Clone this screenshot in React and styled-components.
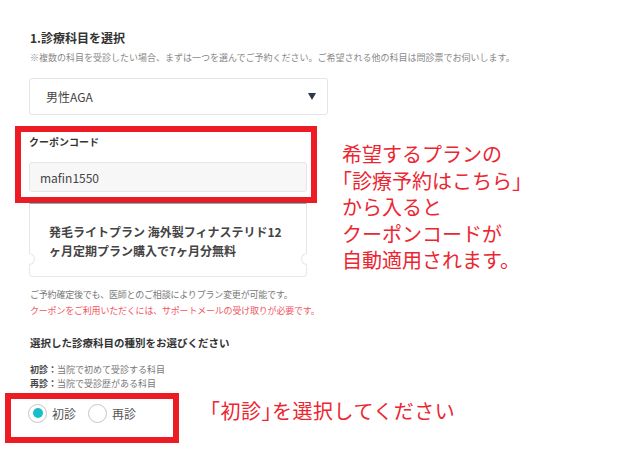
import styled, { createGlobalStyle } from 'styled-components';

const GlobalStyle = createGlobalStyle`
  html, body {
    margin: 0;
    padding: 0;
    background: #fff;
  }

  body {
    font-family: "Noto Sans CJK JP", "Noto Sans", sans-serif;
    color: #333;
  }
`;

const visitTypes = [
  { id: 'first', label: '初診', checked: true },
  { id: 'return', label: '再診', checked: false },
];

function App() {
  return (
    <>
      <GlobalStyle />
      <Page>
        <Form>
          {/* 診療科目 */}
          <Title>1.診療科目を選択</Title>
          <Note>
            ※複数の科目を受診したい場合、まずは一つを選んでご予約ください。ご希望される他の科目は問診票でお伺いします。
          </Note>
          <Select>
            <span>男性AGA</span>
            <Caret />
          </Select>

          {/* クーポン */}
          <Highlight $ml={-14} $width={302}>
            <CouponBox>
              <Label>クーポンコード</Label>
              <CouponInput defaultValue="mafin1550" readOnly />
            </CouponBox>
          </Highlight>

          <Ticket>
            発毛ライトプラン 海外製フィナステリド12
            <br />
            ヶ月定期プラン購入で7ヶ月分無料
          </Ticket>

          <Caption>
            ご予約確定後でも、医師とのご相談によりプラン変更が可能です。
            <br />
            <Warn>クーポンをご利用いただくには、サポートメールの受け取りが必要です。</Warn>
          </Caption>

          {/* 初診・再診 */}
          <SubTitle>選択した診療科目の種別をお選びください</SubTitle>
          <Legend>
            <div>
              <b>初診：</b>当院で初めて受診する科目
            </div>
            <div>
              <b>再診：</b>当院で受診歴がある科目
            </div>
          </Legend>

          <Highlight $ml={-24} $width={174} $mt={2}>
            <RadioRow>
              {visitTypes.map((item) => (
                <RadioItem key={item.id}>
                  <RadioMark $checked={item.checked} />
                  {item.label}
                </RadioItem>
              ))}
            </RadioRow>
          </Highlight>
        </Form>

        <Callout $left={342} $top={141} $size={20} $lh={26.5}>
          希望するプランの
          <br />
          「診療予約はこちら」
          <br />
          から入ると
          <br />
          クーポンコードが
          <br />
          自動適用されます。
        </Callout>

        <Callout $left={210} $top={398} $size={20} $lh={26} $spacing={0.5}>
          「初診」を選択してください
        </Callout>
      </Page>
    </>
  );
}

export default App;

const Page = styled.div`
  position: relative;
  width: 625px;
  height: 452px;
  overflow: hidden;
`;

const Form = styled.div`
  width: 299px;
  padding: 29px 0 0 29px;
`;

const Title = styled.h2`
  margin: 0 0 0 1px;
  font-size: 12px;
  line-height: 18px;
  font-weight: 700;
  color: #333;
`;

const Note = styled.p`
  margin: 5px 0 0 1px;
  font-size: 9px;
  line-height: 12px;
  white-space: nowrap;
  color: #888;
`;

const Select = styled.div`
  box-sizing: border-box;
  height: 37px;
  margin-top: 14px;
  padding: 0 11px 0 16px;
  border: 1px solid #e3e4ea;
  border-radius: 3px;
  background: #fff;

  display: flex;
  align-items: center;
  justify-content: space-between;

  font-size: 12px;
  color: #444;
`;

const Caret = styled.i`
  width: 0;
  height: 0;
  border-left: 4.5px solid transparent;
  border-right: 4.5px solid transparent;
  border-top: 7px solid #2f3a48;
`;

const Highlight = styled.div`
  box-sizing: border-box;
  width: ${(p) => p.$width}px;
  margin-left: ${(p) => p.$ml}px;
  margin-top: ${(p) => p.$mt ?? 11}px;
  border: 6px solid #ed1c24;
`;

const CouponBox = styled.div`
  padding: 3px 4px 5px 8px;
`;

const Label = styled.div`
  font-size: 10px;
  line-height: 14px;
  font-weight: 700;
  color: #333;
`;

const CouponInput = styled.input`
  box-sizing: border-box;
  display: block;
  width: 278px;
  height: 30px;
  margin-top: 13px;
  padding: 0 10px;
  border: 1px solid #e6e6ea;
  border-radius: 3px;
  background: #f7f7f8;
  outline: none;

  font-family: inherit;
  font-size: 12px;
  color: #444;
`;

const Ticket = styled.div`
  position: relative;
  box-sizing: border-box;
  width: 278px;
  height: 74px;
  padding: 18px 19px 0;
  border: 1px solid #e6e7ec;
  border-top: 1px solid #4cc6cf;
  border-radius: 0 0 4px 4px;

  font-size: 12px;
  line-height: 19px;
  font-weight: 700;
  color: #444;
  white-space: nowrap;

  /* 左右の半円の切り欠き */
  &::before,
  &::after {
    content: '';
    position: absolute;
    top: 49px;
    box-sizing: border-box;
    width: 6px;
    height: 12px;
    border: 1px solid #e6e7ec;
    background: #fff;
  }

  &::before {
    left: -1px;
    border-left: none;
    border-radius: 0 6px 6px 0;
  }

  &::after {
    right: -1px;
    border-right: none;
    border-radius: 6px 0 0 6px;
  }
`;

const Caption = styled.p`
  margin: 10px 0 0 1px;
  font-size: 9px;
  line-height: 16px;
  letter-spacing: -0.2px;
  white-space: nowrap;
  color: #777;
`;

const Warn = styled.span`
  color: #ef5663;
`;

const SubTitle = styled.h3`
  margin: 16px 0 0 1px;
  font-size: 10.5px;
  line-height: 16px;
  font-weight: 700;
  color: #333;
`;

const Legend = styled.div`
  margin: 12px 0 0 1px;
  font-size: 9px;
  line-height: 14px;
  color: #777;

  b {
    color: #444;
  }
`;

const RadioRow = styled.div`
  display: flex;
  align-items: center;
  gap: 12px;
  height: 38px;
  padding: 0 0 10px 17px;
  box-sizing: border-box;
`;

const RadioItem = styled.label`
  display: flex;
  align-items: center;
  gap: 5px;
  font-size: 12px;
  color: #555;
`;

const RadioMark = styled.span`
  position: relative;
  box-sizing: border-box;
  width: 19px;
  height: 19px;
  border: 1px solid #c4c6ce;
  border-radius: 50%;
  background: #fff;

  &::after {
    content: '';
    display: ${(p) => (p.$checked ? 'block' : 'none')};
    position: absolute;
    inset: 3.5px;
    border-radius: 50%;
    background: #18bfca;
  }
`;

/* 括弧は詰めて組む */
const Callout = styled.div`
  position: absolute;
  left: ${(p) => p.$left}px;
  top: ${(p) => p.$top}px;
  font-size: ${(p) => p.$size}px;
  line-height: ${(p) => p.$lh}px;
  letter-spacing: ${(p) => p.$spacing ?? 0}px;
  font-feature-settings: "halt";
  color: #ec2631;
  white-space: nowrap;
`;
